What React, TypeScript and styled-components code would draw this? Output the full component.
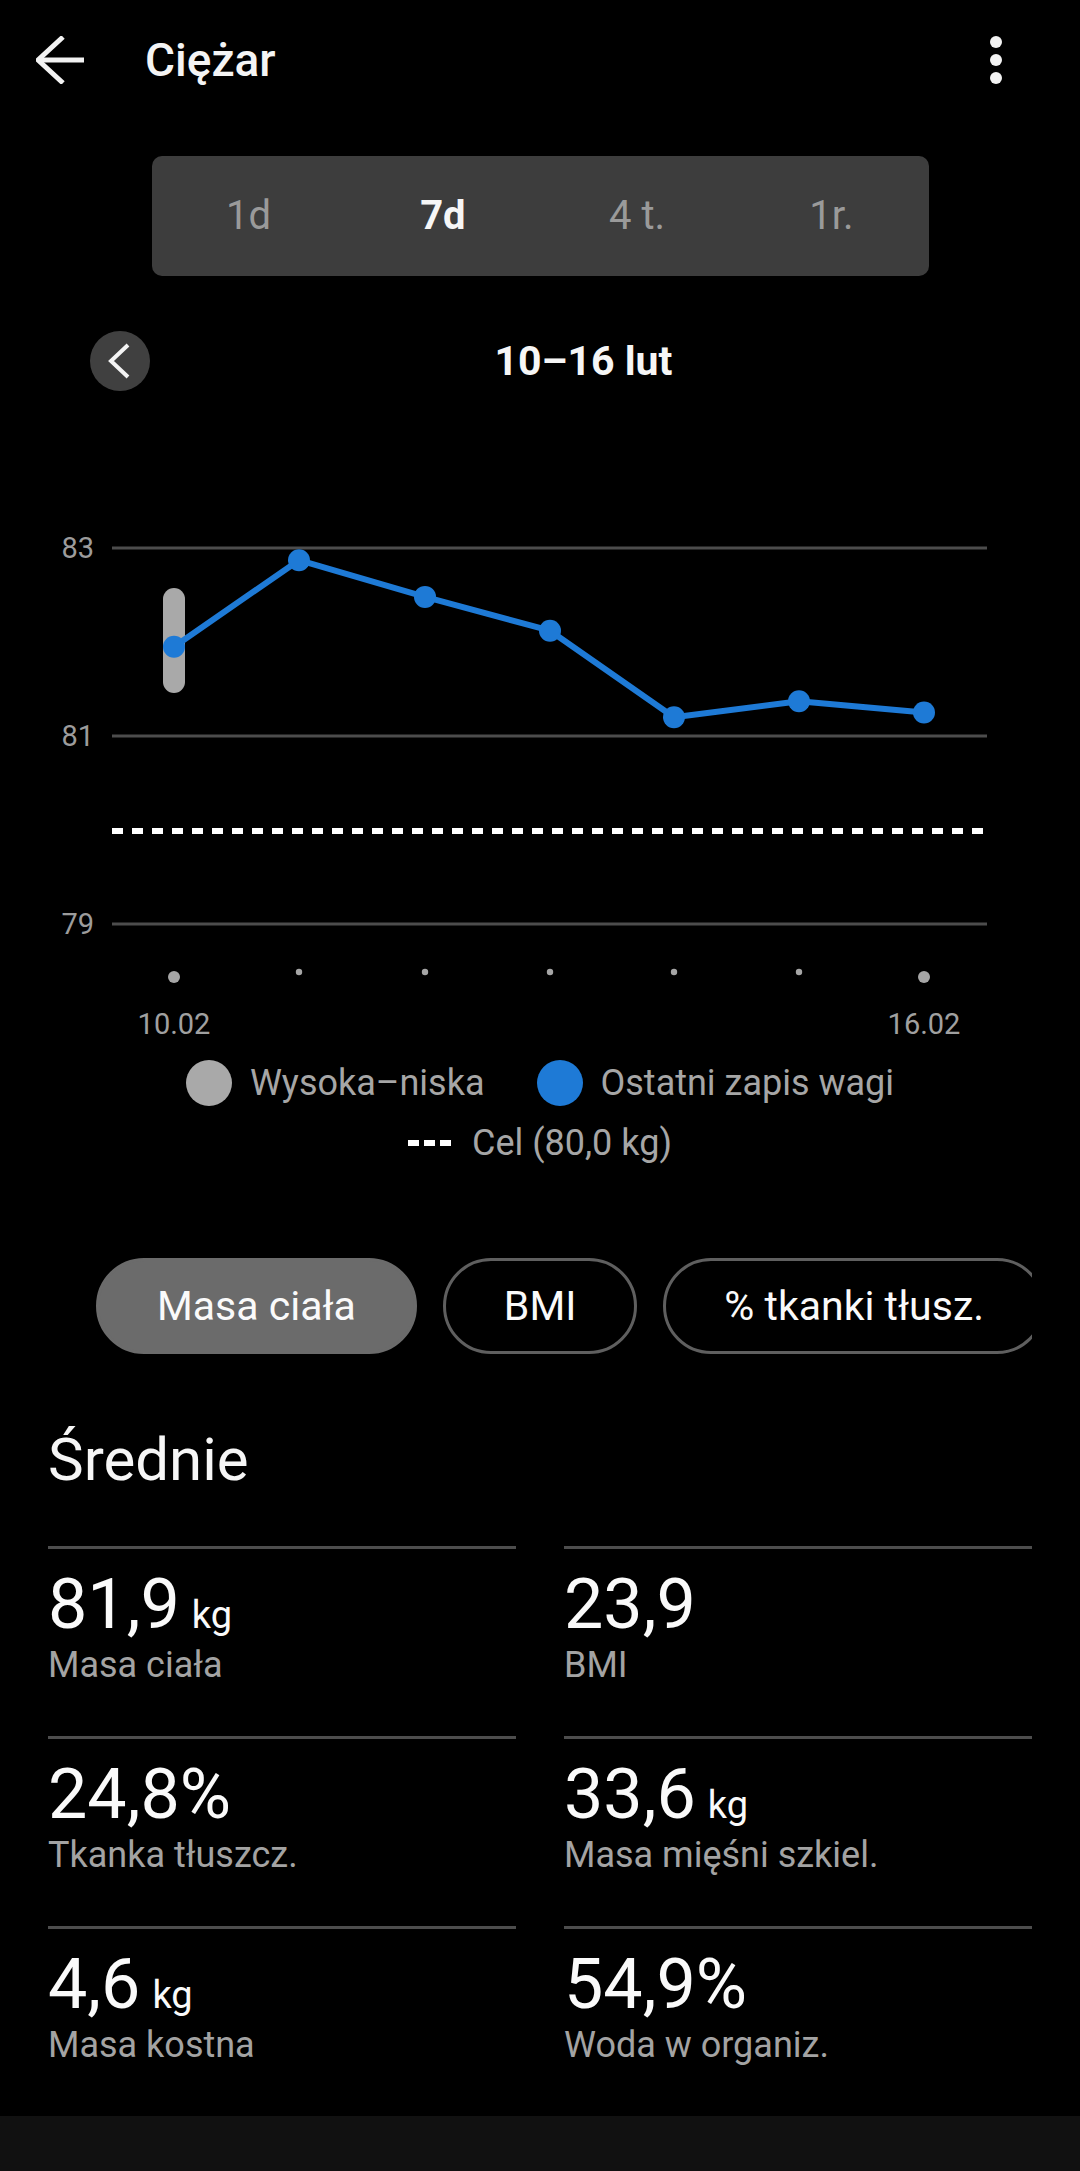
import React from 'react'
import styled, { createGlobalStyle } from 'styled-components'

const GlobalStyle = createGlobalStyle`
  html, body {
    margin: 0;
    padding: 0;
    background: #000;
  }
  body {
    font-family: Roboto, 'Noto Sans', 'Liberation Sans', sans-serif;
    color: #fff;
  }
`

const Page = styled.div`
  width: 1080px;
  min-height: 2171px;
  background: #000;
  display: flex;
  flex-direction: column;
`

const Header = styled.header`
  height: 120px;
  display: flex;
  align-items: center;
  padding: 0 72px 0 36px;
  box-sizing: border-box;
`

const Title = styled.h1`
  margin: 0 0 0 61px;
  flex: 1;
  font-size: 46px;
  line-height: 1;
  font-weight: 500;
  color: #f4f4f4;
`

const Segmented = styled.div`
  margin: 36px auto 0;
  width: 777px;
  height: 120px;
  background: #3d3d3d;
  border-radius: 10px;
  display: grid;
  grid-template-columns: repeat(4, 1fr);
  align-items: center;
`

const Segment = styled.div<{ $active?: boolean }>`
  text-align: center;
  font-size: 40px;
  line-height: 1;
  font-weight: ${(p) => (p.$active ? 700 : 400)};
  color: ${(p) => (p.$active ? '#f6f6f6' : '#9a9a9a')};
`

const DateRow = styled.div`
  margin-top: 55px;
  height: 60px;
  display: flex;
  align-items: center;
  padding: 0 63px 0 90px;
`

const RoundButton = styled.div`
  width: 60px;
  height: 60px;
  border-radius: 50%;
  background: #404040;
  display: flex;
  align-items: center;
  justify-content: center;
`

const DateLabel = styled.div`
  flex: 1;
  text-align: center;
  font-size: 41px;
  font-weight: 700;
  line-height: 1;
  color: #f6f6f6;
`

const ChartSvg = styled.svg`
  display: block;
  margin-top: 109px;
`

const Legend = styled.div`
  margin-top: 10px;
  display: flex;
  flex-direction: column;
  align-items: center;
  gap: 17px;
`

const LegendRow = styled.div<{ $gap: number }>`
  display: flex;
  align-items: center;
  gap: ${(p) => p.$gap}px;
`

const LegendItem = styled.div`
  display: flex;
  align-items: center;
  gap: 18px;
`

const Swatch = styled.span<{ $color: string }>`
  width: 46px;
  height: 46px;
  border-radius: 50%;
  background: ${(p) => p.$color};
`

const GoalDashes = styled.span`
  display: flex;
  gap: 5px;
  & > i {
    width: 11px;
    height: 6px;
    background: #fff;
  }
`

const LegendText = styled.span`
  font-size: 36px;
  line-height: 40px;
  color: #a6a6a6;
`

const ChipScroller = styled.div`
  margin: 95px 48px 0;
  padding-left: 48px;
  overflow: hidden;
  display: flex;
  gap: 26px;
`

const Chip = styled.div<{ $active?: boolean }>`
  flex-shrink: 0;
  height: 96px;
  box-sizing: border-box;
  padding: 0 58px;
  border-radius: 48px;
  display: flex;
  align-items: center;
  font-size: 41px;
  color: #fafafa;
  white-space: nowrap;
  background: ${(p) => (p.$active ? '#6b6b6b' : 'transparent')};
  border: 3px solid ${(p) => (p.$active ? '#6b6b6b' : '#5f5f5f')};
`

const SectionTitle = styled.h2`
  margin: 76px 48px 0;
  font-size: 60px;
  line-height: 1;
  font-weight: 400;
  color: #f6f6f6;
`

const StatsGrid = styled.div`
  margin: 56px 48px 0;
  display: grid;
  grid-template-columns: 1fr 1fr;
  column-gap: 48px;
`

const StatCell = styled.div`
  height: 190px;
  box-sizing: border-box;
  border-top: 3px solid #4d4d4d;
  padding-top: 20px;
`

const StatValue = styled.div`
  font-size: 70px;
  line-height: 1;
  color: #fafafa;
`

const Unit = styled.span`
  font-size: 38px;
  margin-left: 12px;
`

const StatLabel = styled.div`
  margin-top: 8px;
  font-size: 36px;
  line-height: 1;
  color: #a3a3a3;
`

const BottomBar = styled.div`
  margin-top: auto;
  height: 55px;
  background: #111;
`

const BLUE = '#1e7ad6'
const GREY = '#a6a6a6'

const xs = [174, 299, 425, 550, 674, 799, 924]
const values = [81.95, 82.87, 82.48, 82.12, 81.2, 81.37, 81.25]
const yOf = (v: number) => 48 + (83 - v) * 94

const stats = [
  { value: '81,9', unit: 'kg', label: 'Masa ciała' },
  { value: '23,9', label: 'BMI' },
  { value: '24,8%', label: 'Tkanka tłuszcz.' },
  { value: '33,6', unit: 'kg', label: 'Masa mięśni szkiel.' },
  { value: '4,6', unit: 'kg', label: 'Masa kostna' },
  { value: '54,9%', label: 'Woda w organiz.' },
]

const Chart = () => {
  const pts = xs.map((x, i) => [x, yOf(values[i])])
  return (
    <ChartSvg width={1080} height={550} viewBox="0 0 1080 550">
      {[83, 81, 79].map((v) => (
        <g key={v}>
          <line x1={112} x2={987} y1={yOf(v)} y2={yOf(v)} stroke="#4c4c4c" strokeWidth={3} />
          <text
            x={94}
            y={yOf(v) + 10}
            textAnchor="end"
            fontSize={29}
            fill="#9c9c9c"
            fontFamily="Roboto, sans-serif"
          >
            {v}
          </text>
        </g>
      ))}
      <line x1={112} x2={987} y1={331} y2={331} stroke="#fff" strokeWidth={6} strokeDasharray="11 9" />
      <line x1={174} x2={174} y1={99} y2={182} stroke="#a9a9a9" strokeWidth={22} strokeLinecap="round" />
      <polyline
        points={pts.map((p) => p.join(',')).join(' ')}
        fill="none"
        stroke={BLUE}
        strokeWidth={6}
        strokeLinejoin="round"
      />
      {pts.map(([x, y]) => (
        <circle key={x} cx={x} cy={y} r={11} fill={BLUE} />
      ))}
      {xs.map((x, i) =>
        i === 0 || i === xs.length - 1 ? (
          <circle key={x} cx={x} cy={477} r={6} fill={GREY} />
        ) : (
          <circle key={x} cx={x} cy={472} r={3.2} fill={GREY} />
        )
      )}
      <text x={174} y={534} textAnchor="middle" fontSize={29} fill="#a0a0a0" fontFamily="Roboto, sans-serif">
        10.02
      </text>
      <text x={924} y={534} textAnchor="middle" fontSize={29} fill="#a0a0a0" fontFamily="Roboto, sans-serif">
        16.02
      </text>
    </ChartSvg>
  )
}

export default function App() {
  return (
    <Page>
      <GlobalStyle />
      <Header>
        <svg width="48" height="48" viewBox="0 0 48 48">
          <polyline
            points="27,1 2,24 27,47"
            fill="none"
            stroke="#f2f2f2"
            strokeWidth="5"
            strokeLinejoin="miter"
          />
          <line x1="3" y1="24" x2="48" y2="24" stroke="#f2f2f2" strokeWidth="5" />
        </svg>
        <Title>Ciężar</Title>
        <svg width="24" height="48" viewBox="0 0 24 48">
          <circle cx="12" cy="6" r="6" fill="#f2f2f2" />
          <circle cx="12" cy="24" r="6" fill="#f2f2f2" />
          <circle cx="12" cy="42" r="6" fill="#f2f2f2" />
        </svg>
      </Header>

      <Segmented>
        <Segment>1d</Segment>
        <Segment $active>7d</Segment>
        <Segment>4 t.</Segment>
        <Segment>1r.</Segment>
      </Segmented>

      <DateRow>
        <RoundButton>
          <svg width="24" height="36" viewBox="0 0 24 36">
            <polyline points="20,2 3,18 20,34" fill="none" stroke="#f4f4f4" strokeWidth="4" />
          </svg>
        </RoundButton>
        <DateLabel>10–16 lut</DateLabel>
      </DateRow>

      <Chart />

      <Legend>
        <LegendRow $gap={52}>
          <LegendItem>
            <Swatch $color="#a9a9a9" />
            <LegendText>Wysoka–niska</LegendText>
          </LegendItem>
          <LegendItem>
            <Swatch $color={BLUE} />
            <LegendText>Ostatni zapis wagi</LegendText>
          </LegendItem>
        </LegendRow>
        <LegendRow $gap={21}>
          <GoalDashes>
            <i />
            <i />
            <i />
          </GoalDashes>
          <LegendText>Cel (80,0 kg)</LegendText>
        </LegendRow>
      </Legend>

      <ChipScroller>
        <Chip $active>Masa ciała</Chip>
        <Chip>BMI</Chip>
        <Chip>% tkanki tłusz.</Chip>
      </ChipScroller>

      <SectionTitle>Średnie</SectionTitle>

      <StatsGrid>
        {stats.map((s) => (
          <StatCell key={s.label}>
            <StatValue>
              {s.value}
              {s.unit && <Unit>{s.unit}</Unit>}
            </StatValue>
            <StatLabel>{s.label}</StatLabel>
          </StatCell>
        ))}
      </StatsGrid>

      <BottomBar />
    </Page>
  )
}
